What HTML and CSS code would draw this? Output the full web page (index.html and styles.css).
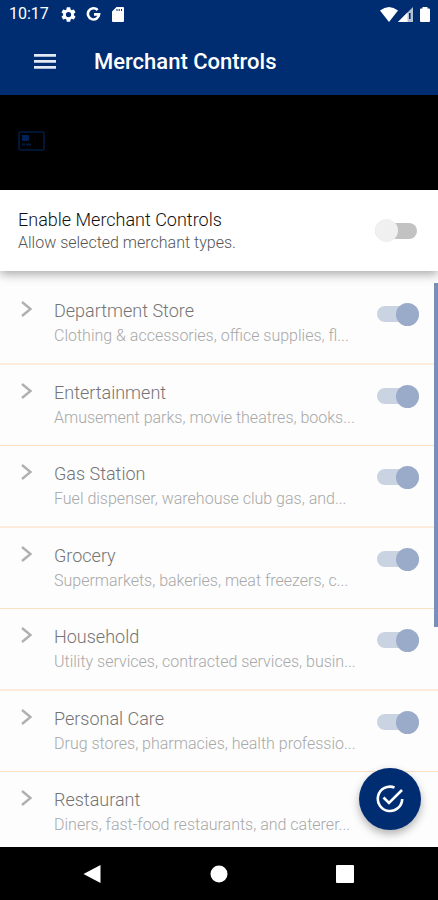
FILE: index.html
```html
<!DOCTYPE html>
<html lang="en">
<head>
    <meta charset="UTF-8">
    <meta name="viewport" content="width=device-width, initial-scale=1.0">
    <title>Merchant Controls</title>
    <link rel="stylesheet" href="styles.css">
</head>
<body>
    <!-- Status bar -->
    <div class="status-bar">
        <span class="clock">10:17</span>
        <svg class="gear" width="15" height="15" viewBox="2 2 20 20"><path fill-rule="evenodd" d="M19.14 12.94c.04-.3.06-.61.06-.94s-.02-.64-.07-.94l2.03-1.58a.49.49 0 0 0 .12-.61l-1.92-3.32a.49.49 0 0 0-.59-.22l-2.39.96a7 7 0 0 0-1.62-.94l-.36-2.54a.48.48 0 0 0-.48-.41h-3.84a.48.48 0 0 0-.47.41l-.36 2.54a7.200 7.200 0 0 0-1.62.94l-2.39-.96a.48.48 0 0 0-.59.22L2.74 8.870a.48.48 0 0 0 .12.61l2.030 1.580a6 6 0 0 0 0 1.880l-2.030 1.580a.49.49 0 0 0-.12.61l1.920 3.320c.12.22.37.29.59.22l2.390-.96c.5.38 1.030.7 1.620.94l.36 2.540c.05.24.24.41.48.41h3.840c.24 0 .44-.17.47-.41l.36-2.540a7 7 0 0 0 1.620-.94l2.390.96c.22.08.47 0 .59-.22l1.920-3.320a.48.48 0 0 0-.12-.61zM12 15.500a3.500 3.500 0 1 1 0-7 3.500 3.500 0 0 1 0 7z"/></svg>
        <svg class="google" width="15" height="16" viewBox="0 0 15 16"><path d="M11.600 4A5.600 5.600 0 1 0 13.100 8.400H8"/></svg>
        <svg class="sd-card" width="12" height="15" viewBox="0 0 12 15"><path fill-rule="evenodd" d="M4.500 0H11a1 1 0 0 1 1 1v13a1 1 0 0 1-1 1H1a1 1 0 0 1-1-1V4.500zM4.500 2v2h1V2zM6.700 2v2h1V2zM9 2v2h1V2z"/></svg>
        <div class="signals">
            <svg width="18" height="15" viewBox="0 0 18 15"><path d="M0 3.500Q9-3.500 18 3.500L9 15z"/></svg>
            <svg width="15" height="15" viewBox="0 0 15 15"><path opacity=".7" d="M15 0v15H0z"/><path d="M9.500 5.500V15H0z"/><path fill="#002d72" d="M11 6h1.600v6H11z"/></svg>
            <svg class="battery" width="10" height="15" viewBox="0 0 10 15"><path d="M2.500 0h5v1.500H9a1 1 0 0 1 1 1V14a1 1 0 0 1-1 1H1a1 1 0 0 1-1-1V2.500a1 1 0 0 1 1-1h1.500z"/></svg>
        </div>
    </div>

    <!-- App bar -->
    <header class="app-bar">
        <button class="menu-btn" aria-label="Menu">
            <svg width="22" height="16" viewBox="0 0 22 16"><path d="M0 0h22v2.800H0zM0 6h22v2.800H0zM0 12h22v2.800H0z"/></svg>
        </button>
        <h1>Merchant Controls</h1>
    </header>

    <!-- Selected card -->
    <div class="card-strip">
        <svg width="27" height="20" viewBox="0 0 27 20"><rect x="1" y="1" width="25" height="18" rx="1.500" fill="none" stroke="#001c44" stroke-width="1.600"/><rect x="4" y="4" width="7" height="6" rx="1" fill="#00225a"/><path d="M4 13.500h3M8 13.500h5" stroke="#001a40" stroke-width="2"/></svg>
    </div>

    <!-- Main switch -->
    <section class="enable">
        <div class="enable-text">
            <label for="enable">Enable Merchant Controls</label>
            <p>Allow selected merchant types.</p>
        </div>
        <input type="checkbox" class="switch" id="enable">
    </section>

    <!-- Merchant types -->
    <main class="types">
        <ul class="type-list">
            <li class="type">
                <button class="expand" aria-label="Expand Department Store"><svg width="12" height="16" viewBox="0 0 12 16"><path d="M1 1l8.500 7L1 15"/></svg></button>
                <div class="type-text">
                    <label for="department">Department Store</label>
                    <p>Clothing &amp; accessories, office supplies, fl...</p>
                </div>
                <input type="checkbox" class="switch" id="department" checked disabled>
            </li>
            <li class="type">
                <button class="expand" aria-label="Expand Entertainment"><svg width="12" height="16" viewBox="0 0 12 16"><path d="M1 1l8.500 7L1 15"/></svg></button>
                <div class="type-text">
                    <label for="entertainment">Entertainment</label>
                    <p>Amusement parks, movie theatres, books...</p>
                </div>
                <input type="checkbox" class="switch" id="entertainment" checked disabled>
            </li>
            <li class="type">
                <button class="expand" aria-label="Expand Gas Station"><svg width="12" height="16" viewBox="0 0 12 16"><path d="M1 1l8.500 7L1 15"/></svg></button>
                <div class="type-text">
                    <label for="gas">Gas Station</label>
                    <p>Fuel dispenser, warehouse club gas, and...</p>
                </div>
                <input type="checkbox" class="switch" id="gas" checked disabled>
            </li>
            <li class="type">
                <button class="expand" aria-label="Expand Grocery"><svg width="12" height="16" viewBox="0 0 12 16"><path d="M1 1l8.500 7L1 15"/></svg></button>
                <div class="type-text">
                    <label for="grocery">Grocery</label>
                    <p>Supermarkets, bakeries, meat freezers, c...</p>
                </div>
                <input type="checkbox" class="switch" id="grocery" checked disabled>
            </li>
            <li class="type">
                <button class="expand" aria-label="Expand Household"><svg width="12" height="16" viewBox="0 0 12 16"><path d="M1 1l8.500 7L1 15"/></svg></button>
                <div class="type-text">
                    <label for="household">Household</label>
                    <p>Utility services, contracted services, busin...</p>
                </div>
                <input type="checkbox" class="switch" id="household" checked disabled>
            </li>
            <li class="type">
                <button class="expand" aria-label="Expand Personal Care"><svg width="12" height="16" viewBox="0 0 12 16"><path d="M1 1l8.500 7L1 15"/></svg></button>
                <div class="type-text">
                    <label for="personal">Personal Care</label>
                    <p>Drug stores, pharmacies, health professio...</p>
                </div>
                <input type="checkbox" class="switch" id="personal" checked disabled>
            </li>
            <li class="type">
                <button class="expand" aria-label="Expand Restaurant"><svg width="12" height="16" viewBox="0 0 12 16"><path d="M1 1l8.500 7L1 15"/></svg></button>
                <div class="type-text">
                    <label for="restaurant">Restaurant</label>
                    <p>Diners, fast-food restaurants, and caterer...</p>
                </div>
                <input type="checkbox" class="switch" id="restaurant" checked disabled>
            </li>
        </ul>
        <div class="scroll-thumb"></div>
        <button class="fab" aria-label="Save">
            <svg width="28" height="28" viewBox="0 0 28 28"><path d="M18.500 2.500A12.200 12.200 0 1 0 26.200 14M7.500 12.500l5.500 5.500L26 5"/></svg>
        </button>
    </main>

    <!-- Android navigation -->
    <nav class="nav-bar">
        <button aria-label="Back"><svg width="18" height="18" viewBox="0 0 18 18"><path d="M17.500 0v18L.500 9z"/></svg></button>
        <button aria-label="Home"><svg width="18" height="18" viewBox="0 0 18 18"><circle cx="9" cy="9" r="8.500"/></svg></button>
        <button aria-label="Recent apps"><svg width="18" height="18" viewBox="0 0 18 18"><rect width="18" height="18" rx="1"/></svg></button>
    </nav>
</body>
</html>
```

FILE: styles.css
```css
* {
    margin: 0;
    padding: 0;
    box-sizing: border-box;
}

body {
    display: flex;
    flex-direction: column;
    height: 100vh;
    font-family: Roboto, sans-serif;
    background: #fdfdfd;
    color: #111;
    overflow: hidden;
}

button {
    display: flex;
    align-items: center;
    justify-content: center;
    border: none;
    background: none;
    cursor: pointer;
}

svg {
    display: block;
    flex: none;
}

/* Status bar */
.status-bar {
    display: flex;
    align-items: center;
    flex: none;
    height: 28px;
    padding: 0 8px 0 9px;
    background: #002d72;
    color: #fff;
    fill: #fff;
}

.clock {
    font-size: 16px;
    line-height: 28px;
}

.gear {
    margin-left: 12px;
}

.google {
    margin-left: 10px;
    fill: none;
    stroke: #fff;
    stroke-width: 2.600;
}

.sd-card {
    margin-left: 11px;
}

.signals {
    display: flex;
    align-items: center;
    margin-left: auto;
}

.battery {
    margin-left: 7px;
}

/* App bar */
.app-bar {
    display: flex;
    align-items: center;
    flex: none;
    height: 67px;
    padding: 0 34px;
    background: #002d72;
    color: #fff;
}

.menu-btn {
    fill: #e4e9f6;
}

.app-bar h1 {
    margin-left: 38px;
    font-size: 22px;
    font-weight: 500;
    line-height: 28px;
}

/* Selected card */
.card-strip {
    display: flex;
    align-items: center;
    flex: none;
    height: 95px;
    padding: 0 18px 4px;
    background: #000;
}

/* Main switch */
.enable {
    display: flex;
    align-items: center;
    flex: none;
    z-index: 1;
    height: 81px;
    padding: 0 21px 0 18px;
    background: #fff;
    box-shadow: 0 3px 10px rgba(0, 0, 0, 0.35);
}

.enable-text {
    flex: 1;
}

.enable label {
    display: block;
    font-size: 18px;
    font-weight: 300;
    line-height: 24px;
}

.enable p {
    font-size: 16px;
    font-weight: 300;
    line-height: 22px;
    color: #555;
}

/* Merchant types */
.types {
    position: relative;
    flex: 1;
    min-height: 0;
    padding-top: 12px;
    overflow: hidden;
}

.type-list {
    list-style: none;
}

.type {
    display: flex;
    align-items: flex-start;
    padding: 15px 19px 15px 20px;
    border-bottom: 1px solid #fddfc4;
}

.type:nth-child(odd) {
    border-bottom: 2px solid #fdebdc;
}

.expand {
    width: 14px;
    height: 22px;
    margin-right: 20px;
    fill: none;
    stroke: #b0b0b0;
    stroke-width: 2.400;
}

.type-text {
    flex: 1;
    min-width: 0;
}

.type label {
    display: block;
    font-size: 18px;
    font-weight: 300;
    line-height: 25px;
    color: #747474;
}

.type p {
    font-size: 16px;
    font-weight: 300;
    line-height: 25px;
    white-space: nowrap;
    color: #a8a8a8;
}

/* Toggle switch */
.switch {
    appearance: none;
    display: flex;
    align-items: center;
    flex: none;
    width: 42px;
    height: 16px;
    border-radius: 8px;
    background: #c2c2c2;
}

.switch::before {
    content: "";
    width: 23px;
    height: 23px;
    flex: none;
    border-radius: 50%;
    background: #f0f0f0;
}

.switch:checked {
    justify-content: flex-end;
    margin-top: 8px;
    background: #cad3e1;
}

.switch:checked::before {
    background: #99abc9;
}

.scroll-thumb {
    position: absolute;
    top: 12px;
    right: 0;
    width: 4px;
    height: 344px;
    background: #7890b8;
}

/* Save button */
.fab {
    position: absolute;
    right: 17px;
    bottom: 17px;
    width: 62px;
    height: 62px;
    border-radius: 50%;
    background: #002d72;
    box-shadow: 0 4px 8px rgba(0, 0, 0, 0.3);
    fill: none;
    stroke: #fff;
    stroke-width: 2.600;
}

/* Android navigation */
.nav-bar {
    display: flex;
    align-items: center;
    justify-content: space-between;
    flex: none;
    height: 53px;
    padding: 0 84px 0 83px;
    background: #000;
    fill: #fff;
}
```
